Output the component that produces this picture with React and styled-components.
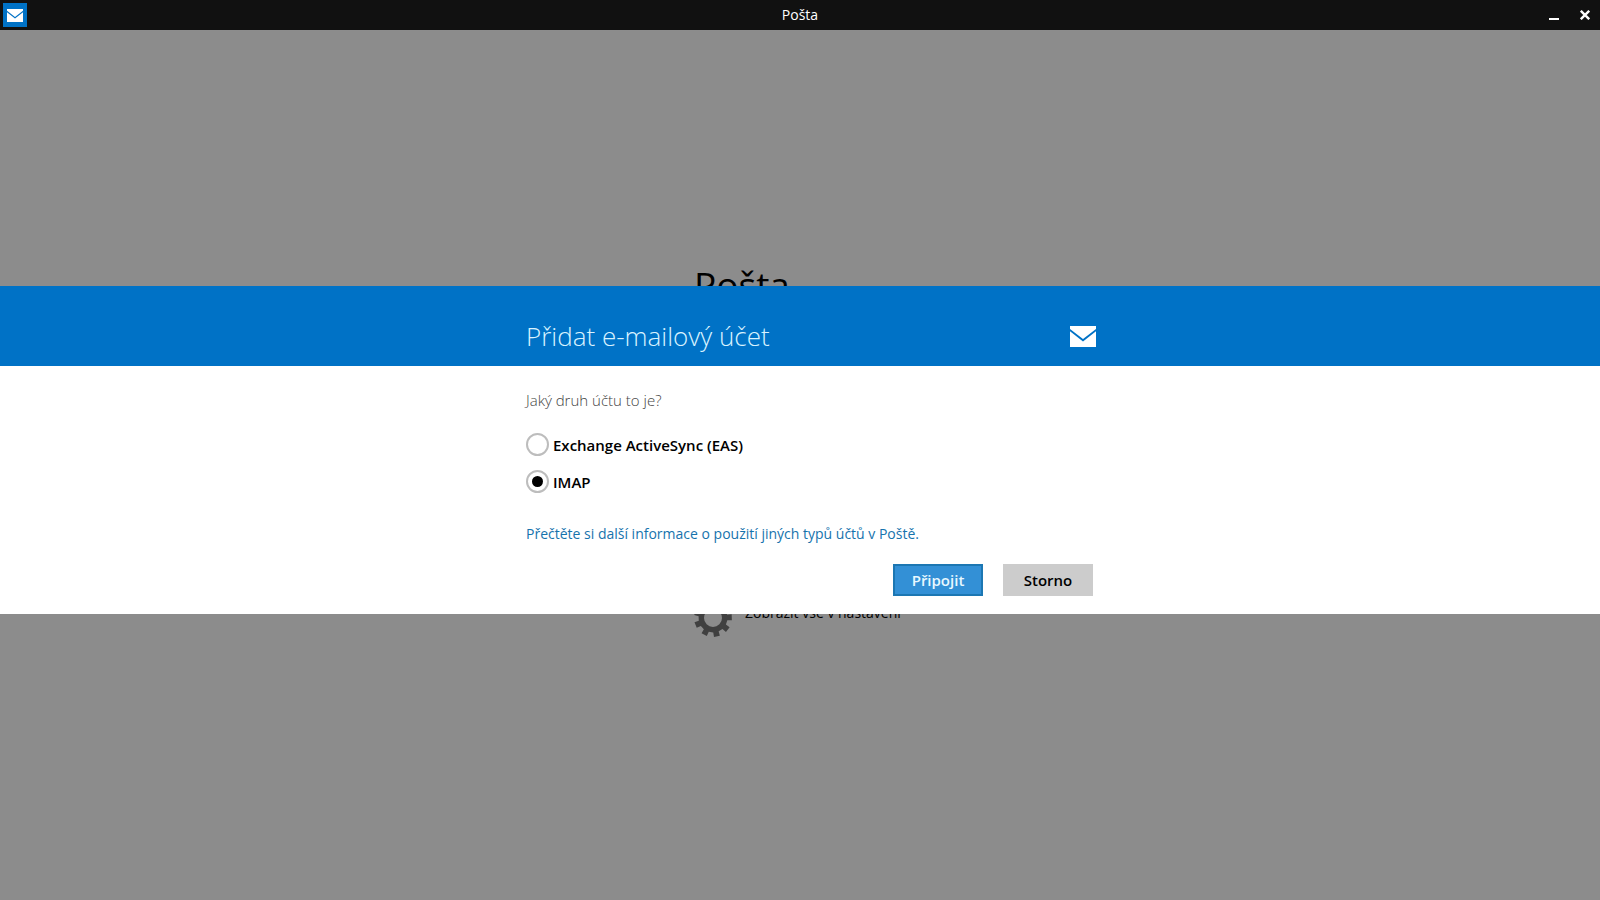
import React, { useState } from "react";
import styled, { createGlobalStyle } from "styled-components";

const GlobalStyle = createGlobalStyle`
  *, *::before, *::after { box-sizing: border-box; }
  body {
    margin: 0;
    background: #8c8c8c;
    color: #000;
    font: 400 15px/20px "Segoe UI", "Open Sans", "Noto Sans", sans-serif;
  }
`;

const Screen = styled.div`
  display: flex;
  flex-direction: column;
  min-height: 100vh;
`;

const TitleBar = styled.header`
  display: grid;
  grid-template-columns: 1fr auto 1fr;
  align-items: center;
  height: 30px;
  background: #111;
  color: #fff;
`;

const AppTile = styled.span`
  display: grid;
  place-items: center;
  width: 24px;
  height: 24px;
  margin-left: 3px;
  background: #0072c6;
`;

const WindowTitle = styled.span`
  font-size: 14px;
`;

const WindowControls = styled.div`
  display: flex;
  justify-content: flex-end;
`;

const WindowButton = styled.button`
  display: grid;
  place-items: center;
  width: 31px;
  height: 30px;
  padding: 0;
  border: 0;
  background: transparent;
  color: #fff;
`;

const Page = styled.main`
  display: flex;
  flex: 1;
  justify-content: center;
  align-items: center;
  padding-bottom: 32px;
`;

const Welcome = styled.section`
  display: flex;
  flex-direction: column;
  gap: 290px;
  width: 212px;
`;

const WelcomeTitle = styled.h1`
  margin: 0;
  font-size: 37px;
  line-height: 48px;
  font-weight: 400;
`;

const SettingsRow = styled.div`
  display: flex;
  gap: 13px;
  font-size: 14px;
  line-height: 28px;
  white-space: nowrap;
`;

const Overlay = styled.div`
  position: fixed;
  inset: 0;
  display: flex;
  align-items: center;
`;

const Dialog = styled.form`
  width: 100%;
  background: #fff;
`;

const DialogHeader = styled.div`
  background: #0072c6;
  color: #d9f3ff;
`;

const Column = styled.div`
  width: 600px;
  max-width: 100%;
  margin: 0 auto;
  padding: 0 7px 0 26px;
`;

const HeaderColumn = styled(Column)`
  display: flex;
  justify-content: space-between;
  align-items: center;
  height: 80px;
  padding-top: 20px;
  padding-right: 4px;
`;

const DialogTitle = styled.h2`
  margin: 0;
  font-size: 26px;
  line-height: 36px;
  font-weight: 300;
`;

const DialogBody = styled(Column)`
  padding-top: 24px;
  padding-bottom: 18px;
`;

const Choices = styled.fieldset`
  display: flex;
  flex-direction: column;
  gap: 14px;
  min-width: 0;
  margin: 0;
  padding: 0;
  border: 0;
`;

const Question = styled.legend`
  padding: 0;
  margin-bottom: 23px;
  color: #444;
  font-size: 15px;
  font-weight: 300;
`;

const Choice = styled.label`
  display: flex;
  align-items: center;
  gap: 4px;
  font-size: 15px;
  font-weight: 600;
`;

const Radio = styled.input`
  appearance: none;
  display: grid;
  place-items: center;
  width: 23px;
  height: 23px;
  margin: 0;
  border: 2px solid #bdbdbd;
  border-radius: 50%;
  background: #fff;

  &:checked::before {
    content: "";
    width: 11px;
    height: 11px;
    border-radius: 50%;
    background: #000;
  }
`;

const HelpLink = styled.a`
  display: block;
  margin-top: 31px;
  color: #1673ad;
  font-size: 14px;
  text-decoration: none;
`;

const Actions = styled.div`
  display: flex;
  justify-content: flex-end;
  gap: 20px;
  margin-top: 20px;
`;

const ActionButton = styled.button`
  width: 90px;
  height: 32px;
  padding: 0;
  border: 2px solid ${(p) => (p.$primary ? "#1c77b3" : "#ccc")};
  background: ${(p) => (p.$primary ? "#3390d6" : "#ccc")};
  color: ${(p) => (p.$primary ? "#e8f8ff" : "#000")};
  font: inherit;
  font-weight: 600;
`;

function MailIcon({ width, height }) {
  return (
    <svg width={width} height={height} viewBox="0 0 26 21" preserveAspectRatio="none" aria-hidden="true">
      <path fill="#fff" d="M0 0H26V3L13 13L0 3Z M0 5.2L13 15.4L26 5.2V21H0Z" />
    </svg>
  );
}

const TEETH = 9;

function gearOutline() {
  const point = (radius, degrees) => {
    const a = (degrees * Math.PI) / 180;
    return `${(19 + radius * Math.cos(a)).toFixed(2)} ${(19 + radius * Math.sin(a)).toFixed(2)}`;
  };
  const points = [];
  for (let i = 0; i < TEETH; i += 1) {
    const mid = i * (360 / TEETH) - 2;
    points.push(point(14.5, mid - 11), point(19, mid - 9), point(19, mid + 9), point(14.5, mid + 11));
  }
  return `M${points.join("L")}Z M10 19a9 9 0 1 0 18 0a9 9 0 1 0 -18 0Z`;
}

function GearIcon() {
  return (
    <svg width="38" height="38" viewBox="0 0 38 38" aria-hidden="true">
      <path fill="#404040" fillRule="evenodd" d={gearOutline()} />
    </svg>
  );
}

const ACCOUNT_TYPES = [
  { id: "eas", label: "Exchange ActiveSync (EAS)" },
  { id: "imap", label: "IMAP" },
];

export default function App() {
  const [type, setType] = useState("imap");

  return (
    <Screen>
      <GlobalStyle />
      <TitleBar>
        <AppTile>
          <MailIcon width={16} height={13} />
        </AppTile>
        <WindowTitle>Pošta</WindowTitle>
        <WindowControls>
          <WindowButton type="button" aria-label="Minimalizovat">
            <svg width="10" height="10" viewBox="0 0 10 10">
              <path fill="currentColor" d="M0 8H10V10H0Z" />
            </svg>
          </WindowButton>
          <WindowButton type="button" aria-label="Zavřít">
            <svg width="10" height="10" viewBox="0 0 10 10">
              <path stroke="currentColor" strokeWidth="2.4" d="M.8 .8L9.2 9.2M9.2 .8L.8 9.2" />
            </svg>
          </WindowButton>
        </WindowControls>
      </TitleBar>

      <Page>
        <Welcome>
          <WelcomeTitle>Pošta</WelcomeTitle>
          <SettingsRow>
            <GearIcon />
            <span>Zobrazit vše v nastavení</span>
          </SettingsRow>
        </Welcome>
      </Page>

      <Overlay>
        <Dialog role="dialog" aria-labelledby="dialog-title" onSubmit={(e) => e.preventDefault()}>
          <DialogHeader>
            <HeaderColumn>
              <DialogTitle id="dialog-title">Přidat e-mailový účet</DialogTitle>
              <MailIcon width={26} height={21} />
            </HeaderColumn>
          </DialogHeader>
          <DialogBody>
            <Choices>
              <Question>Jaký druh účtu to je?</Question>
              {ACCOUNT_TYPES.map(({ id, label }) => (
                <Choice key={id} htmlFor={id}>
                  <Radio
                    type="radio"
                    name="account-type"
                    id={id}
                    checked={type === id}
                    onChange={() => setType(id)}
                  />
                  {label}
                </Choice>
              ))}
            </Choices>
            <HelpLink href="#help">Přečtěte si další informace o použití jiných typů účtů v Poště.</HelpLink>
            <Actions>
              <ActionButton type="submit" $primary>
                Připojit
              </ActionButton>
              <ActionButton type="button">Storno</ActionButton>
            </Actions>
          </DialogBody>
        </Dialog>
      </Overlay>
    </Screen>
  );
}
